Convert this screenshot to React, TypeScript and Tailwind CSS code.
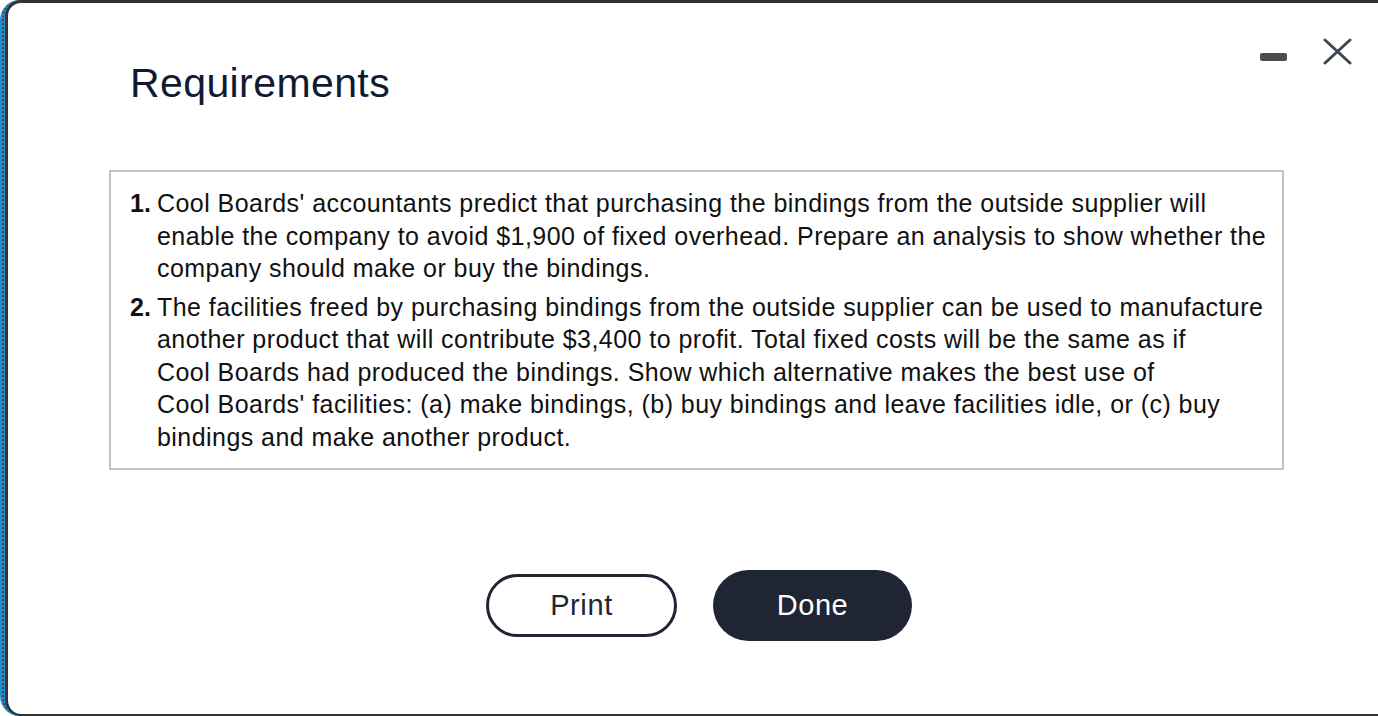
export default function App() {
  const font = { fontFamily: '"Liberation Sans", Arial, Helvetica, sans-serif' };

  const items = [
    {
      n: '1.',
      lines: [
        "Cool Boards' accountants predict that purchasing the bindings from the outside supplier will",
        'enable the company to avoid $1,900 of fixed overhead. Prepare an analysis to show whether the',
        'company should make or buy the bindings.',
      ],
    },
    {
      n: '2.',
      lines: [
        'The facilities freed by purchasing bindings from the outside supplier can be used to manufacture',
        'another product that will contribute $3,400 to profit. Total fixed costs will be the same as if',
        'Cool Boards had produced the bindings. Show which alternative makes the best use of',
        "Cool Boards' facilities: (a) make bindings, (b) buy bindings and leave facilities idle, or (c) buy",
        'bindings and make another product.',
      ],
    },
  ];

  return (
    <div className="h-[716px] w-[1378px] overflow-hidden bg-white" style={font}>
      <div className="flex h-full rounded-l-[20px] border-l-2 border-[#1b8fd3] bg-white">
        <div className="flex flex-1 rounded-l-[18px] border-l-2 border-dotted border-[#4f3f3a] bg-[#1b8fd3] pl-px">
          <div className="flex flex-1 flex-col rounded-l-[16px] border-b-2 border-l-[3px] border-t-[3px] border-[#333333] bg-white">
            {/* header */}
            <div className="flex items-start">
              <h1 className="ml-[122px] mt-[56px] text-[41px] leading-[48px] tracking-[0.4px] text-[#0f1b33]">
                Requirements
              </h1>
              <div className="ml-auto mr-[26px] mt-[35px] flex items-start gap-[36px]">
                <div className="mt-[15px] h-[8px] w-[27px] rounded-[2px] bg-[#4d4d4d]" />
                <svg width="29" height="27" viewBox="0 0 29 27">
                  <path d="M2 2 L27 25 M27 2 L2 25" stroke="#3b4757" strokeWidth="3" strokeLinecap="round" />
                </svg>
              </div>
            </div>

            {/* requirement box */}
            <div className="ml-[101px] mt-[63px] w-[1175px] border-2 border-[#c2c2c2] px-[19px] pb-[15px] pt-[15px]">
              <div className="flex flex-col gap-[6px]">
                {items.map((it) => (
                  <div key={it.n} className="flex text-[25px] leading-[32.5px] tracking-[0.45px] text-[#111111]">
                    <span className="w-[27px] shrink-0 font-bold tracking-normal">{it.n}</span>
                    <div className="flex flex-col whitespace-nowrap">
                      {it.lines.map((l) => (
                        <span key={l}>{l}</span>
                      ))}
                    </div>
                  </div>
                ))}
              </div>
            </div>

            {/* buttons */}
            <div className="ml-[478px] mt-[100px] flex items-center gap-[36px]">
              <button className="flex h-[63px] w-[191px] items-center justify-center rounded-full border-[3px] border-[#1f2532] text-[29px] tracking-[0.6px] text-[#1f2532]">
                Print
              </button>
              <button className="flex h-[71px] w-[199px] items-center justify-center rounded-full bg-[#1f2532] text-[29px] tracking-[0.6px] text-white">
                Done
              </button>
            </div>
          </div>
        </div>
      </div>
    </div>
  );
}
